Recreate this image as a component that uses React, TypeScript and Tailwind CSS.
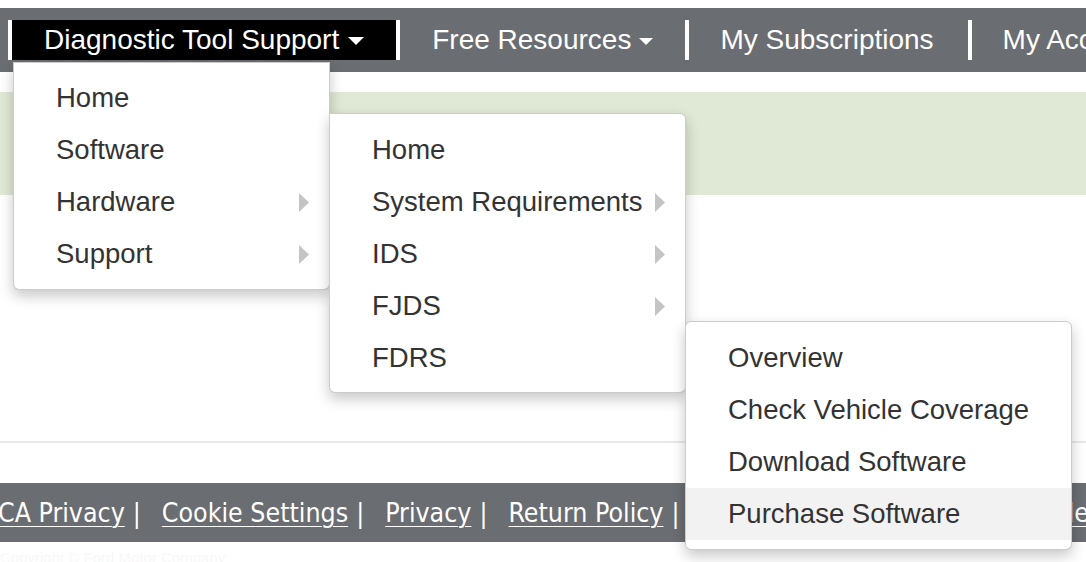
import type { ReactNode } from 'react';

type MenuItem = {
  label: string;
  arrow?: boolean;
  active?: boolean;
  sub?: ReactNode;
};

function Arrow() {
  return (
    <svg width="10" height="19" viewBox="0 0 10 19" className="shrink-0">
      <path d="M0 0 L10 9.5 L0 19 Z" fill="#c4c4c4" />
    </svg>
  );
}

function Caret({ big }: { big?: boolean }) {
  return big ? (
    <svg width="16" height="8" viewBox="0 0 16 8" className="ml-[9px] mt-[2px]">
      <path d="M0 0 H16 L8 8 Z" fill="#fff" />
    </svg>
  ) : (
    <svg width="14" height="7" viewBox="0 0 14 7" className="ml-[8px] mt-[2px]">
      <path d="M0 0 H14 L7 7 Z" fill="#fff" />
    </svg>
  );
}

function Menu({ items, className }: { items: MenuItem[]; className: string }) {
  return (
    <ul
      className={`absolute z-10 bg-white border border-black/20 shadow-[0_6px_14px_rgba(0,0,0,0.22)] ${className}`}
    >
      {items.map((it) => (
        <li
          key={it.label}
          className={`relative h-[52px] flex items-center justify-between pl-[42px] pr-[20px] text-[27.5px] text-[#333] whitespace-nowrap ${
            it.active ? 'bg-[#f2f2f2]' : ''
          }`}
        >
          <span>{it.label}</span>
          {it.arrow && <Arrow />}
          {it.sub}
        </li>
      ))}
    </ul>
  );
}

const SOFTWARE_ITEMS: MenuItem[] = [
  { label: 'Overview' },
  { label: 'Check Vehicle Coverage' },
  { label: 'Download Software' },
  { label: 'Purchase Software', active: true },
];

const TOOL_ITEMS: MenuItem[] = [
  { label: 'Home' },
  { label: 'System Requirements', arrow: true },
  { label: 'IDS', arrow: true },
  { label: 'FJDS', arrow: true },
  {
    label: 'FDRS',
    sub: (
      <Menu
        items={SOFTWARE_ITEMS}
        className="left-full top-[-11px] w-[387px] pt-[10px] pb-[9px] rounded-md"
      />
    ),
  },
];

const SUPPORT_ITEMS: MenuItem[] = [
  { label: 'Home' },
  {
    label: 'Software',
    sub: (
      <Menu
        items={TOOL_ITEMS}
        className="left-full top-[-11px] w-[357px] pt-[10px] pb-[8px] rounded-md rounded-tl-none"
      />
    ),
  },
  { label: 'Hardware', arrow: true },
  { label: 'Support', arrow: true },
];

const FOOTER_LINKS = [
  'CA Privacy',
  'Cookie Settings',
  'Privacy',
  'Return Policy',
  'Terms & Conditions of Sale',
  'Help',
];

export default function App() {
  return (
    <div className="w-[1086px] h-[562px] overflow-hidden bg-white font-['Liberation_Sans',Arial,sans-serif]">
      <div className="pt-2">
        <nav className="relative z-20 h-16 bg-[#6a6d71] flex items-center pl-2 text-white text-[28px] whitespace-nowrap">
          <ul className="flex items-center">
            <li className="relative h-10 flex items-center bg-black border-l-4 border-white pl-8 pr-8">
              <span>Diagnostic Tool Support</span>
              <Caret big />
              <Menu
                items={SUPPORT_ITEMS}
                className="left-[1px] top-[42px] w-[317px] pt-[9px] pb-[9px] rounded-b-md"
              />
            </li>
            <li className="h-10 flex items-center border-l-4 border-white pl-[32px] pr-[32px]">
              <span>Free Resources</span>
              <Caret />
            </li>
            <li className="h-10 flex items-center border-l-4 border-white pl-[31px] pr-[34px]">
              <span>My Subscriptions</span>
            </li>
            <li className="h-10 flex items-center border-l-4 border-white pl-[31px]">
              <span>My Account</span>
            </li>
          </ul>
        </nav>

        <div className="mt-5 h-[103px] bg-[#e0e9d5]" />

        <div className="mt-[246px] h-[2px] bg-[#e8e8e8]" />

        <footer className="mt-10 h-[59px] bg-[#6a6d71] flex items-center whitespace-nowrap text-white text-[26.5px] font-['DejaVu_Sans_Condensed','DejaVu_Sans',sans-serif] font-stretch-condensed">
          {FOOTER_LINKS.map((link, i) => (
            <span key={link} className={`flex items-center ${i === 0 ? '-ml-[2px]' : ''}`}>
              <a className="underline underline-offset-[4px] decoration-1">{link}</a>
              {i < FOOTER_LINKS.length - 1 && <span className="ml-2 mr-[21px]">|</span>}
            </span>
          ))}
        </footer>

        <p className="pt-[5px] text-[15px] text-[#f8f8f8]">Copyright © Ford Motor Company</p>
      </div>
    </div>
  );
}
